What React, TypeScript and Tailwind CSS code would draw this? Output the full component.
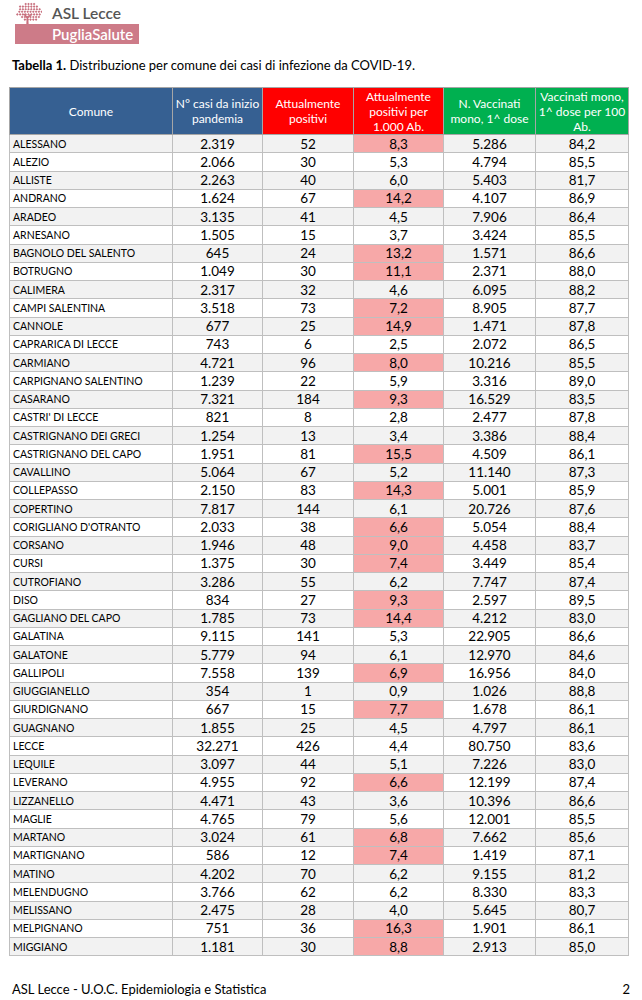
import React from 'react'

type Row = [string, string, string, string, string, string]

const rows: Row[] = [
  ['ALESSANO', '2.319', '52', '8,3', '5.286', '84,2'],
  ['ALEZIO', '2.066', '30', '5,3', '4.794', '85,5'],
  ['ALLISTE', '2.263', '40', '6,0', '5.403', '81,7'],
  ['ANDRANO', '1.624', '67', '14,2', '4.107', '86,9'],
  ['ARADEO', '3.135', '41', '4,5', '7.906', '86,4'],
  ['ARNESANO', '1.505', '15', '3,7', '3.424', '85,5'],
  ['BAGNOLO DEL SALENTO', '645', '24', '13,2', '1.571', '86,6'],
  ['BOTRUGNO', '1.049', '30', '11,1', '2.371', '88,0'],
  ['CALIMERA', '2.317', '32', '4,6', '6.095', '88,2'],
  ['CAMPI SALENTINA', '3.518', '73', '7,2', '8.905', '87,7'],
  ['CANNOLE', '677', '25', '14,9', '1.471', '87,8'],
  ['CAPRARICA DI LECCE', '743', '6', '2,5', '2.072', '86,5'],
  ['CARMIANO', '4.721', '96', '8,0', '10.216', '85,5'],
  ['CARPIGNANO SALENTINO', '1.239', '22', '5,9', '3.316', '89,0'],
  ['CASARANO', '7.321', '184', '9,3', '16.529', '83,5'],
  ["CASTRI' DI LECCE", '821', '8', '2,8', '2.477', '87,8'],
  ['CASTRIGNANO DEI GRECI', '1.254', '13', '3,4', '3.386', '88,4'],
  ['CASTRIGNANO DEL CAPO', '1.951', '81', '15,5', '4.509', '86,1'],
  ['CAVALLINO', '5.064', '67', '5,2', '11.140', '87,3'],
  ['COLLEPASSO', '2.150', '83', '14,3', '5.001', '85,9'],
  ['COPERTINO', '7.817', '144', '6,1', '20.726', '87,6'],
  ["CORIGLIANO D'OTRANTO", '2.033', '38', '6,6', '5.054', '88,4'],
  ['CORSANO', '1.946', '48', '9,0', '4.458', '83,7'],
  ['CURSI', '1.375', '30', '7,4', '3.449', '85,4'],
  ['CUTROFIANO', '3.286', '55', '6,2', '7.747', '87,4'],
  ['DISO', '834', '27', '9,3', '2.597', '89,5'],
  ['GAGLIANO DEL CAPO', '1.785', '73', '14,4', '4.212', '83,0'],
  ['GALATINA', '9.115', '141', '5,3', '22.905', '86,6'],
  ['GALATONE', '5.779', '94', '6,1', '12.970', '84,6'],
  ['GALLIPOLI', '7.558', '139', '6,9', '16.956', '84,0'],
  ['GIUGGIANELLO', '354', '1', '0,9', '1.026', '88,8'],
  ['GIURDIGNANO', '667', '15', '7,7', '1.678', '86,1'],
  ['GUAGNANO', '1.855', '25', '4,5', '4.797', '86,1'],
  ['LECCE', '32.271', '426', '4,4', '80.750', '83,6'],
  ['LEQUILE', '3.097', '44', '5,1', '7.226', '83,0'],
  ['LEVERANO', '4.955', '92', '6,6', '12.199', '87,4'],
  ['LIZZANELLO', '4.471', '43', '3,6', '10.396', '86,6'],
  ['MAGLIE', '4.765', '79', '5,6', '12.001', '85,5'],
  ['MARTANO', '3.024', '61', '6,8', '7.662', '85,6'],
  ['MARTIGNANO', '586', '12', '7,4', '1.419', '87,1'],
  ['MATINO', '4.202', '70', '6,2', '9.155', '81,2'],
  ['MELENDUGNO', '3.766', '62', '6,2', '8.330', '83,3'],
  ['MELISSANO', '2.475', '28', '4,0', '5.645', '80,7'],
  ['MELPIGNANO', '751', '36', '16,3', '1.901', '86,1'],
  ['MIGGIANO', '1.181', '30', '8,8', '2.913', '85,0'],
]

const Tree = () => {
  // leafy crown made of little dots, loosely like the ASL logo
  const dots: [number, number][] = []
  for (let y = 3; y <= 19; y += 2.6) {
    for (let x = 2; x <= 25; x += 2.8) {
      const dx = (x - 13.5) / 12
      const dy = (y - 11) / 9
      if (dx * dx + dy * dy <= 1) dots.push([x + ((y * 10) % 2), y])
    }
  }
  return (
    <svg width="28" height="26" viewBox="0 0 28 26">
      {dots.map(([x, y], i) => (
        <path key={i} d={`M${x} ${y} l1.3 -1.3 l1.3 1.3 l-1.3 1.3z`} fill="#c8707e" />
      ))}
      <path d="M13 26 L13.4 17 L10 13 M13.4 17 L17 13.5 M13.6 19 L14 26" stroke="#c8707e" strokeWidth="1.6" fill="none" />
    </svg>
  )
}

const Logo = () => (
  <div className="relative h-[46px] w-[140px]">
    <div className="absolute left-[14px] top-[1px]">
      <Tree />
    </div>
    <div className="absolute left-[52px] top-[3px] text-[15.5px] font-semibold leading-[20px] text-[#555]">
      ASL Lecce
    </div>
    <div className="absolute left-[15px] top-[24px] flex h-[20px] w-[124px] items-center bg-[#cd7b88] pl-[37px] text-[15px] font-semibold text-white">
      PugliaSalute
    </div>
  </div>
)

const App = () => {
  return (
    <div className="h-[1000px] w-[642px] bg-white font-['Lato','Open_Sans',sans-serif] text-black">
      <Logo />
      <p className="mt-[12px] pl-[12px] text-[13px] leading-[15px]">
        <span className="font-bold">Tabella 1.</span> Distribuzione per comune dei casi di infezione da COVID-19.
      </p>
      <table className="mt-[14px] ml-[9px] w-[619px] table-fixed border-collapse">
        <colgroup>
          <col className="w-[163px]" />
          <col className="w-[90px]" />
          <col className="w-[91px]" />
          <col className="w-[90px]" />
          <col className="w-[92px]" />
          <col className="w-[93px]" />
        </colgroup>
        <thead>
          <tr className="h-[47px] text-[12px] leading-[15px] text-white">
            <th className="border border-[#a6a6a6] bg-[#366092] font-normal">Comune</th>
            <th className="border border-[#a6a6a6] bg-[#366092] font-normal">N° casi da inizio<br />pandemia</th>
            <th className="border border-[#a6a6a6] bg-[#ff0000] font-normal">Attualmente<br />positivi</th>
            <th className="border border-[#a6a6a6] bg-[#ff0000] font-normal">Attualmente<br />positivi per<br />1.000 Ab.</th>
            <th className="border border-[#a6a6a6] bg-[#00b050] font-normal">N. Vaccinati<br />mono, 1^ dose</th>
            <th className="border border-[#a6a6a6] bg-[#00b050] font-normal">Vaccinati mono,<br />1^ dose per 100<br />Ab.</th>
          </tr>
        </thead>
        <tbody>
          {rows.map((r, i) => {
            const bg = i % 2 === 0 ? 'bg-[#f2f2f2]' : 'bg-white'
            const hot = parseFloat(r[3].replace(',', '.')) >= 6.5
            return (
              <tr key={r[0]} className="h-[18.25px]">
                <td className={`border border-[#bfbfbf] ${bg} py-0 pl-[3px] text-[10.5px] leading-[16px]`}>{r[0]}</td>
                <td className={`border border-[#bfbfbf] ${bg} py-0 text-center text-[13.5px] leading-[16px]`}>{r[1]}</td>
                <td className={`border border-[#bfbfbf] ${bg} py-0 text-center text-[13.5px] leading-[16px]`}>{r[2]}</td>
                <td className={`border border-[#bfbfbf] ${hot ? 'bg-[#f7a8a8]' : bg} py-0 text-center text-[13.5px] leading-[16px]`}>{r[3]}</td>
                <td className={`border border-[#bfbfbf] ${bg} py-0 text-center text-[13.5px] leading-[16px]`}>{r[4]}</td>
                <td className={`border border-[#bfbfbf] ${bg} py-0 text-center text-[13.5px] leading-[16px]`}>{r[5]}</td>
              </tr>
            )
          })}
        </tbody>
      </table>
      <div className="mt-[25px] flex justify-between pl-[12px] pr-[12px] text-[13px] leading-[16px]">
        <span>ASL Lecce - U.O.C. Epidemiologia e Statistica</span>
        <span>2</span>
      </div>
    </div>
  )
}

export default App
